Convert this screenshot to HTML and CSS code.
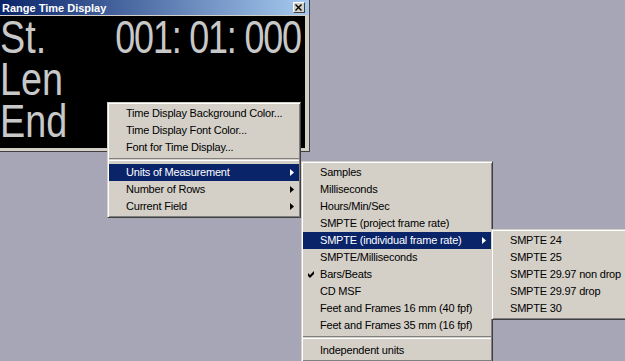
FILE: index.html
```html
<!DOCTYPE html>
<html lang="en">
<head>
    <meta charset="UTF-8">
    <title>Range Time Display</title>
    <link rel="stylesheet" href="styles.css">
</head>
<body>
<div class="window">
    <div class="titlebar">
        <span class="title">Range Time Display</span>
        <span class="close-btn">
            <svg width="8" height="7" viewBox="0 0 8 7"><path d="M0.5 0.5 L6.5 6.5 M6.5 0.5 L0.5 6.5" stroke="#000" stroke-width="1.4"/></svg>
        </span>
    </div>
    <div class="display">
        <div class="row"><span class="label">St.</span><span class="time">001: 01: 000</span></div>
        <div class="row"><span class="label">Len</span></div>
        <div class="row"><span class="label">End</span></div>
    </div>
</div>

<!-- context menu -->
<div class="menu" id="main-menu">
    <div class="item">Time Display Background Color...</div>
    <div class="item">Time Display Font Color...</div>
    <div class="item">Font for Time Display...</div>
    <div class="separator"></div>
    <div class="item active">Units of Measurement<svg class="arrow" width="4" height="7"><polygon points="0,0 4,3.5 0,7"/></svg></div>
    <div class="item">Number of Rows<svg class="arrow" width="4" height="7"><polygon points="0,0 4,3.5 0,7"/></svg></div>
    <div class="item">Current Field<svg class="arrow" width="4" height="7"><polygon points="0,0 4,3.5 0,7"/></svg></div>
</div>

<div class="menu" id="units-menu">
    <div class="item">Samples</div>
    <div class="item">Milliseconds</div>
    <div class="item">Hours/Min/Sec</div>
    <div class="item">SMPTE (project frame rate)</div>
    <div class="item active">SMPTE (individual frame rate)<svg class="arrow" width="4" height="7"><polygon points="0,0 4,3.5 0,7"/></svg></div>
    <div class="item">SMPTE/Milliseconds</div>
    <div class="item"><svg class="check" width="7" height="7"><polygon points="0,2 2,4 6,0 6,3 2,7 0,5"/></svg>Bars/Beats</div>
    <div class="item">CD MSF</div>
    <div class="item">Feet and Frames 16 mm (40 fpf)</div>
    <div class="item">Feet and Frames 35 mm (16 fpf)</div>
    <div class="separator"></div>
    <div class="item">Independent units</div>
</div>

<div class="menu" id="smpte-menu">
    <div class="item">SMPTE 24</div>
    <div class="item">SMPTE 25</div>
    <div class="item">SMPTE 29.97 non drop</div>
    <div class="item">SMPTE 29.97 drop</div>
    <div class="item">SMPTE 30</div>
</div>
</body>
</html>
```

FILE: styles.css
```css
body {
    margin: 0;
    background-color: #a6a6b6;
    font-family: "Liberation Sans", Arial, sans-serif;
    font-size: 11px;
    overflow: hidden;
    width: 625px;
    height: 361px;
    position: relative;
}

.window {
    position: absolute;
    left: 0;
    top: 0;
    width: 305px;
    height: 151px;
    padding-right: 4px;
    background-color: #d4d0c8;
    border-right: 1px solid #404040;
    border-bottom: 1px solid #404040;
    display: flex;
    flex-direction: column;
}

.titlebar {
    height: 15px;
    background: linear-gradient(to right, #0a246a, #a6caf0);
    display: flex;
    align-items: center;
    justify-content: space-between;
    padding: 0 4px 0 2px;
    margin-right: -4px;
    margin-bottom: 1px;
}

.title {
    color: #fff;
    font-family: "Liberation Sans", sans-serif;
    font-weight: bold;
    font-size: 11px;
}

.close-btn {
    width: 10px;
    height: 9px;
    background-color: #d4d0c8;
    border: 1px solid;
    border-color: #fff #404040 #404040 #fff;
    display: flex;
    align-items: center;
    justify-content: center;
}

.display {
    background-color: #000;
    color: #c8c8c8;
    height: 132px;
    font-family: "Liberation Sans", sans-serif;
    font-size: 46px;
}

.row {
    height: 42px;
    line-height: 42px;
    display: flex;
    justify-content: space-between;
    padding-right: 4px;
}

.label {
    display: inline-block;
    flex-shrink: 0;
    transform: scaleX(0.82);
    transform-origin: left center;
}

.time {
    display: inline-block;
    flex-shrink: 0;
    white-space: nowrap;
    letter-spacing: -1.5px;
    transform: scaleX(0.78);
    transform-origin: right center;
}

.menu {
    position: absolute;
    background-color: #d4d0c8;
    border: 1px solid;
    border-color: #d4d0c8 #404040 #404040 #d4d0c8;
    box-shadow: inset 1px 1px #fff, inset -1px -1px #808080;
    padding: 2px 1px;
    color: #000;
    letter-spacing: -0.2px;
}

#main-menu {
    left: 107px;
    top: 102px;
    width: 194px;
    box-sizing: border-box;
}

#units-menu {
    left: 301px;
    top: 161px;
    width: 192px;
    box-sizing: border-box;
}

#smpte-menu {
    left: 491px;
    top: 229px;
    width: 150px;
    box-sizing: border-box;
}

.item {
    height: 17px;
    line-height: 17px;
    padding-left: 17px;
    position: relative;
    white-space: nowrap;
}

.item.active {
    background-color: #0a246a;
    color: #fff;
}

.arrow {
    position: absolute;
    right: 5px;
    top: 5px;
    fill: #000;
}

.active .arrow {
    fill: #fff;
}

.check {
    position: absolute;
    left: 5px;
    top: 5px;
    fill: #000;
}

.separator {
    height: 1px;
    border-top: 1px solid #808080;
    border-bottom: 1px solid #fff;
    margin: 2px 0 3px;
}
```
